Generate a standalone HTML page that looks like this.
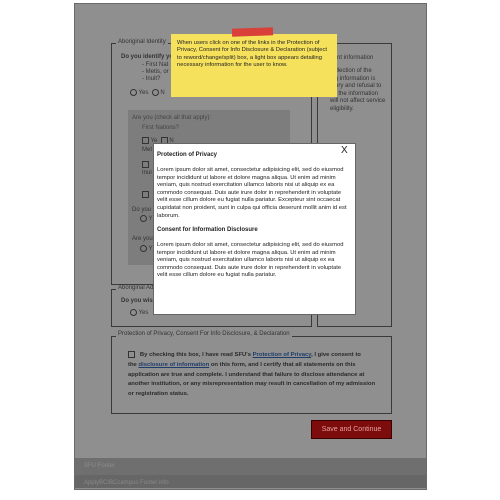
<!DOCTYPE html>
<html><head><style>
body{margin:0;width:500px;height:500px;background:#fff;position:relative;overflow:hidden;font-family:"Liberation Sans",sans-serif;}
.a{position:absolute}
.t{font-size:6px;color:#333;line-height:8px;white-space:nowrap}
.b{font-weight:bold}
.fs{border:1px solid #3a3a3a}
.lg{background:#8f8f8f;padding:0 2px;font-size:6px;color:#333}
.rad{display:inline-block;width:5px;height:5px;border:1px solid #333;border-radius:50%;vertical-align:middle}
.chk{display:inline-block;width:5px;height:5px;border:1px solid #333;vertical-align:middle}
</style></head><body>
<div class="a" style="left:74px;top:3px;width:351px;height:485px;background:#8f8f8f;border:1px solid #6a6a6a"></div>
<div class="a fs" style="left:111px;top:43px;width:199px;height:240px"></div>
<div class="a lg" style="left:116px;top:39px">Aboriginal Identity</div>
<div class="a t b" style="left:121px;top:53px">Do you identify yo</div>
<div class="a t" style="left:142px;top:62px;line-height:7px">- First Nat<br>- Metis, or<br>- Inuit?</div>
<div class="a t" style="left:130px;top:89px"><span class="rad"></span> Yes &nbsp;<span class="rad"></span> N</div>
<div class="a" style="left:128px;top:110px;width:162px;height:155px;background:#7d7d7d"></div>
<div class="a t" style="left:132px;top:114px;color:#444">Are you (check all that apply):</div>
<div class="a t" style="left:142px;top:124px;color:#444">First Nations?</div>
<div class="a t" style="left:142px;top:137px"><span class="chk"></span> Ye &nbsp;<span class="chk"></span> N</div>
<div class="a t" style="left:142px;top:146px">Met</div>
<div class="a t" style="left:142px;top:161px"><span class="chk"></span></div>
<div class="a t" style="left:142px;top:169px">Inui</div>
<div class="a t" style="left:142px;top:191px"><span class="chk"></span></div>
<div class="a t" style="left:132px;top:206px">Do you</div>
<div class="a t" style="left:140px;top:215px"><span class="rad"></span> Y</div>
<div class="a t" style="left:132px;top:235px">Are you</div>
<div class="a t" style="left:140px;top:245px"><span class="rad"></span> Y</div>
<div class="a fs" style="left:317px;top:43px;width:73px;height:282px"></div>
<div class="a t" style="left:330px;top:54px">rtant information</div>
<div class="a t" style="left:330px;top:68px;line-height:7.5px">collection of the<br>ing information is<br>atory and refusal to<br>de the information<br>will not affect service<br>eligibility.</div>
<div class="a fs" style="left:111px;top:289px;width:199px;height:36px"></div>
<div class="a lg" style="left:116px;top:285px">Aboriginal Ad</div>
<div class="a t b" style="left:121px;top:297px">Do you wis</div>
<div class="a t" style="left:130px;top:309px"><span class="rad"></span> Yes</div>
<div class="a fs" style="left:111px;top:336px;width:279px;height:76px"></div>
<div class="a lg" style="left:116px;top:331px">Protection of Privacy, Consent For Info Disclosure, &amp; Declaration</div>
<div class="a t b" style="left:128px;top:351px;line-height:9.8px;font-size:5.9px;color:#2a2a2a"><span class="chk"></span> &nbsp; By checking this box, I have read SFU's <u style="color:#1f3d6b">Protection of Privacy</u>, I give consent to<br>the <u style="color:#1f3d6b">disclosure of information</u> on this form, and I certify that all statements on this<br>application are true and complete. I understand that failure to disclose attendance at<br>another institution, or any misrepresentation may result in cancellation of my admission<br>or registration status.</div>
<div class="a" style="left:311px;top:420px;width:79px;height:17px;background:#7d0c0c;border:1px solid #3a0000;color:#e8a0a0;font-size:7px;line-height:17px;text-align:center">Save and Continue</div>
<div class="a" style="left:75px;top:458px;width:351px;height:17px;background:#6f6f6f"></div>
<div class="a t" style="left:84px;top:462px;color:#8d8d8d">SFU Footer</div>
<div class="a" style="left:75px;top:475px;width:351px;height:13px;background:#666"></div>
<div class="a t" style="left:84px;top:479px;color:#888">ApplyBC/BCcampus Footer info</div>
<div class="a" style="left:171px;top:34px;width:166px;height:63px;background:#f6e15c"></div>
<div class="a" style="left:232px;top:28px;width:41px;height:8px;background:#d9403a;transform:rotate(-2deg)"></div>
<div class="a t" style="left:177px;top:40px;font-size:5.8px;line-height:7.3px;color:#222">When users click on one of the links in the Protection of<br>Privacy, Consent for Info Disclosure &amp; Declaration (subject<br>to reword/change/split) box, a light box appears detailing<br>necessary information for the user to know.</div>
<div class="a" style="left:153px;top:143px;width:201px;height:170px;background:#fff;border:1px solid #666"></div>
<div class="a" style="left:341px;top:145px;font-size:10px;color:#222">X</div>
<div class="a t b" style="left:157px;top:151px;color:#222">Protection of Privacy</div>
<div class="a t" style="left:157px;top:167px;line-height:7.6px;color:#222;font-size:5.85px">Lorem ipsum dolor sit amet, consectetur adipisicing elit, sed do eiusmod<br>tempor incididunt ut labore et dolore magna aliqua. Ut enim ad minim<br>veniam, quis nostrud exercitation ullamco laboris nisi ut aliquip ex ea<br>commodo consequat. Duis aute irure dolor in reprehenderit in voluptate<br>velit esse cillum dolore eu fugiat nulla pariatur. Excepteur sint occaecat<br>cupidatat non proident, sunt in culpa qui officia deserunt mollit anim id est<br>laborum.</div>
<div class="a t b" style="left:157px;top:226px;color:#222">Consent for Information Disclosure</div>
<div class="a t" style="left:157px;top:242px;line-height:7.6px;color:#222;font-size:5.85px">Lorem ipsum dolor sit amet, consectetur adipisicing elit, sed do eiusmod<br>tempor incididunt ut labore et dolore magna aliqua. Ut enim ad minim<br>veniam, quis nostrud exercitation ullamco laboris nisi ut aliquip ex ea<br>commodo consequat. Duis aute irure dolor in reprehenderit in voluptate<br>velit esse cillum dolore eu fugiat nulla pariatur.</div>
</body></html>
